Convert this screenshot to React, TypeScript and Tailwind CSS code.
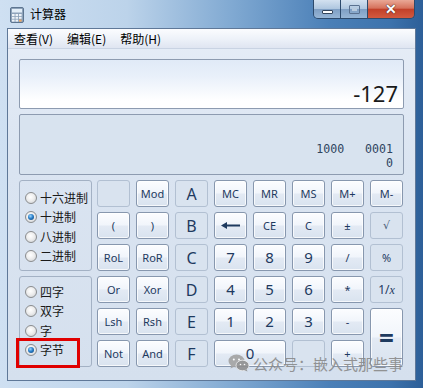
import type { ReactNode } from "react";

type Key = {
  t: ReactNode;
  off?: boolean;
  size?: string;
  cls?: string;
};

const sm = "text-[11px]";
const big = "text-[15px]";
const hex = "text-[16px]";

const keys: Key[] = [
  { t: "", off: true },
  { t: "Mod", size: sm },
  { t: "A", off: true, size: hex },
  { t: "MC", size: sm },
  { t: "MR", size: sm },
  { t: "MS", size: sm },
  { t: "M+", size: sm },
  { t: "M-", size: sm },

  { t: "(", size: sm },
  { t: ")", size: sm },
  { t: "B", off: true, size: hex },
  { t: <BackArrow />, size: sm },
  { t: "CE", size: sm },
  { t: "C", size: sm },
  { t: "±", size: sm },
  { t: "√", off: true, size: "text-[11px] font-['DejaVu_Sans',sans-serif] text-[#4a5f7a]" },

  { t: "RoL", size: sm },
  { t: "RoR", size: sm },
  { t: "C", off: true, size: hex },
  { t: "7", size: big },
  { t: "8", size: big },
  { t: "9", size: big },
  { t: "/", size: sm },
  { t: "%", off: true, size: sm },

  { t: "Or", size: sm },
  { t: "Xor", size: sm },
  { t: "D", off: true, size: hex },
  { t: "4", size: big },
  { t: "5", size: big },
  { t: "6", size: big },
  { t: "*", size: sm },
  {
    t: (
      <span>
        1/<span className="font-['Liberation_Serif',serif] italic">x</span>
      </span>
    ),
    off: true,
    size: "text-[12px]",
  },

  { t: "Lsh", size: sm },
  { t: "Rsh", size: sm },
  { t: "E", off: true, size: hex },
  { t: "1", size: big },
  { t: "2", size: big },
  { t: "3", size: big },
  { t: "-", size: sm },
  { t: "=", size: "text-[26px] font-bold", cls: "row-span-2" },

  { t: "Not", size: sm },
  { t: "And", size: sm },
  { t: "F", off: true, size: hex },
  { t: "0", size: big, cls: "col-span-2" },
  { t: "", off: true },
  { t: "+", size: sm },
];

function BackArrow() {
  return (
    <svg width="19" height="7" viewBox="0 0 19 7">
      <path d="M0 3.5 L6 0 L6 7 Z" fill="#1e3a5f" />
      <rect x="5" y="2.5" width="14" height="2" fill="#1e3a5f" />
    </svg>
  );
}

function CalcIcon() {
  return (
    <svg width="14" height="16" viewBox="0 0 14 16">
      <rect x="0.5" y="0.5" width="13" height="15" rx="1.5" fill="#8ea3ba" stroke="#5d7590" />
      <rect x="2" y="2" width="10" height="3.5" fill="#e3eef8" />
      {[0, 1, 2].map((r) =>
        [0, 1, 2].map((c) => (
          <rect
            key={`${r}-${c}`}
            x={2 + c * 3.5}
            y={7 + r * 2.8}
            width="2.6"
            height="2"
            fill={c == 2 && r == 2 ? "#f0a860" : "#eef3f8"}
          />
        )),
      )}
    </svg>
  );
}

function WeChat() {
  return (
    <svg width="22" height="18" viewBox="0 0 22 18">
      <ellipse cx="8.5" cy="7" rx="8" ry="6.5" fill="#a3a3a3" />
      <path d="M3.5 11 L2.5 14.5 L7 12.5 Z" fill="#a3a3a3" />
      <ellipse cx="14.5" cy="11.5" rx="6.5" ry="5.3" fill="#8f8f8f" stroke="#f3f3f3" strokeWidth="0.8" />
      <path d="M18.5 15 L19.5 17.5 L16 16 Z" fill="#8f8f8f" />
      <circle cx="5.8" cy="5.5" r="1" fill="#fff" />
      <circle cx="11" cy="5.5" r="1" fill="#fff" />
      <circle cx="12.5" cy="10.5" r="0.8" fill="#fff" />
      <circle cx="16.5" cy="10.5" r="0.8" fill="#fff" />
    </svg>
  );
}

function Radio({ label, checked }: { label: string; checked?: boolean }) {
  return (
    <div className="flex h-[19.5px] items-center gap-[3px]">
      <span className="relative h-[12px] w-[12px] rounded-full border border-[#8a8c8e] bg-[radial-gradient(circle_at_45%_40%,#ffffff_0%,#eeeeee_45%,#c9cdd1_100%)]">
        {checked && (
          <span className="absolute left-[2px] top-[2px] h-[6px] w-[6px] rounded-full bg-[radial-gradient(circle_at_40%_35%,#9fd8ff_0%,#2a7fc9_45%,#0b3b6e_100%)]" />
        )}
      </span>
      <span className="text-[12px] text-[#1a1a1a]">{label}</span>
    </div>
  );
}

const glass =
  "bg-[linear-gradient(180deg,#d3e1f0_0%,#aec6df_50%,#7f9fc4_52%,#97b6d6_100%)]";

export default function App() {
  return (
    <div className="relative flex h-[388px] w-[423px] flex-col overflow-hidden bg-[linear-gradient(90deg,#cfe0f2_0%,#bcd3ea_30%,#80a9d2_55%,#4a7fb7_78%,#3d73ad_92%,#2d5f98_100%)] font-[family-name:'Noto_Sans','Noto_Sans_CJK_SC',sans-serif]">
      {/* title bar */}
      <div className="flex h-[28px] items-start">
        <div className="ml-[10px] mt-[7px]">
          <CalcIcon />
        </div>
        <span className="ml-[6px] mt-[6px] font-['Noto_Sans_CJK_SC',sans-serif] text-[12px] leading-[16px] text-black">
          计算器
        </span>
        <div className="ml-auto mr-[8px] flex h-[19px] overflow-hidden rounded-b-[5px] border border-t-0 border-[#2d4a6c]">
          <div className={`flex w-[27px] items-end justify-center border-r border-[#2d4a6c] pb-[4px] ${glass}`}>
            <span className="h-[4px] w-[11px] rounded-[1px] border border-[#34465c] bg-white" />
          </div>
          <div className={`flex w-[27px] items-center justify-center border-r border-[#2d4a6c] ${glass}`}>
            <span className="h-[9px] w-[11px] rounded-[1px] border border-[#5a7190] p-[2px]">
              <span className="block h-full w-full bg-[#b8cadd]" />
            </span>
          </div>
          <div className="flex w-[46px] items-center justify-center bg-[linear-gradient(180deg,#e9a896_0%,#d6725c_45%,#c2412a_52%,#d35a3f_100%)]">
            <span className="text-[14px] font-bold leading-none text-white [text-shadow:0_0_1px_#3a1a14,0_0_1px_#3a1a14]">
              ✕
            </span>
          </div>
        </div>
      </div>

      {/* client */}
      <div className="mx-[7px] mb-[7px] flex flex-1 flex-col border border-[#5f7898] bg-[linear-gradient(180deg,#e6edf7_0%,#dae4f1_40%,#d5e0ee_100%)]">
        <div className="flex h-[20px] items-center gap-[14px] border-b border-[#c9d3e3] bg-[linear-gradient(180deg,#fbfcfe_0%,#eef2f9_50%,#dfe5f1_100%)] pl-[6px] font-['Noto_Sans_CJK_SC',sans-serif] text-[12px] text-black">
          <span>查看(V)</span>
          <span>编辑(E)</span>
          <span>帮助(H)</span>
        </div>

        <div className="flex flex-col px-[11px] pt-[10px]">
          <div className="flex h-[50px] items-end justify-end rounded-[2px] border border-[#8d9bb0] bg-[linear-gradient(180deg,#e0eaf7_0%,#e9f0fa_35%,#ffffff_85%)] pb-[4px] pr-[5px]">
            <span className="text-[22px] leading-none text-[#1a1a1a]">-127</span>
          </div>
          <div className="mt-[5px] flex h-[61px] flex-col items-end justify-end rounded-[2px] border border-[#8d9bb0] bg-[#d8e3ef] pb-[4px] pr-[10px] font-['DejaVu_Sans_Mono',monospace] text-[11.6px] leading-[14px] whitespace-pre text-[#2f4560]">
            <span>1000   0001</span>
            <span>0</span>
          </div>

          <div className="mt-[5px] flex gap-[5px]">
            <div className="flex w-[73px] flex-col gap-[5px] font-['Noto_Sans_CJK_SC',sans-serif]">
              <div className="h-[91px] rounded-[3px] border border-[#a3b1c4] pl-[5px] pt-[7px]">
                <Radio label="十六进制" />
                <Radio label="十进制" checked />
                <Radio label="八进制" />
                <Radio label="二进制" />
              </div>
              <div className="h-[91px] rounded-[3px] border border-[#a3b1c4] pl-[5px] pt-[5px]">
                <Radio label="四字" />
                <Radio label="双字" />
                <Radio label="字" />
                <Radio label="字节" checked />
              </div>
            </div>

            <div className="grid grid-cols-[repeat(8,33px)] grid-rows-[repeat(6,27px)] gap-x-[6px] gap-y-[5px]">
              {keys.map((k, i) => (
                <div
                  key={i}
                  className={`flex items-center justify-center rounded-[3px] border leading-none text-[#1e3a5f] ${k.size ?? ""} ${k.cls ?? ""} ${
                    k.off
                      ? "border-[#b2c0d2] bg-[#d9e3ef]"
                      : "border-[#8797ae] bg-[linear-gradient(180deg,#fcfdff_0%,#f1f5fb_48%,#e3eaf4_52%,#d9e3ef_100%)] shadow-[inset_0_0_0_1px_rgba(255,255,255,0.75)]"
                  }`}
                >
                  {k.t}
                </div>
              ))}
            </div>
          </div>
        </div>
      </div>

      {/* annotation + watermark */}
      <div className="absolute left-[16px] top-[338px] h-[30px] w-[64px] border-[3px] border-[#e00000]" />
      <div className="absolute left-[228px] top-[354px] flex items-center gap-[3px] font-['Noto_Sans_CJK_SC',sans-serif] text-[15px] leading-none text-[#8a8a8a] opacity-90">
        <WeChat />
        <span>公众号：嵌入式那些事</span>
      </div>
    </div>
  );
}
